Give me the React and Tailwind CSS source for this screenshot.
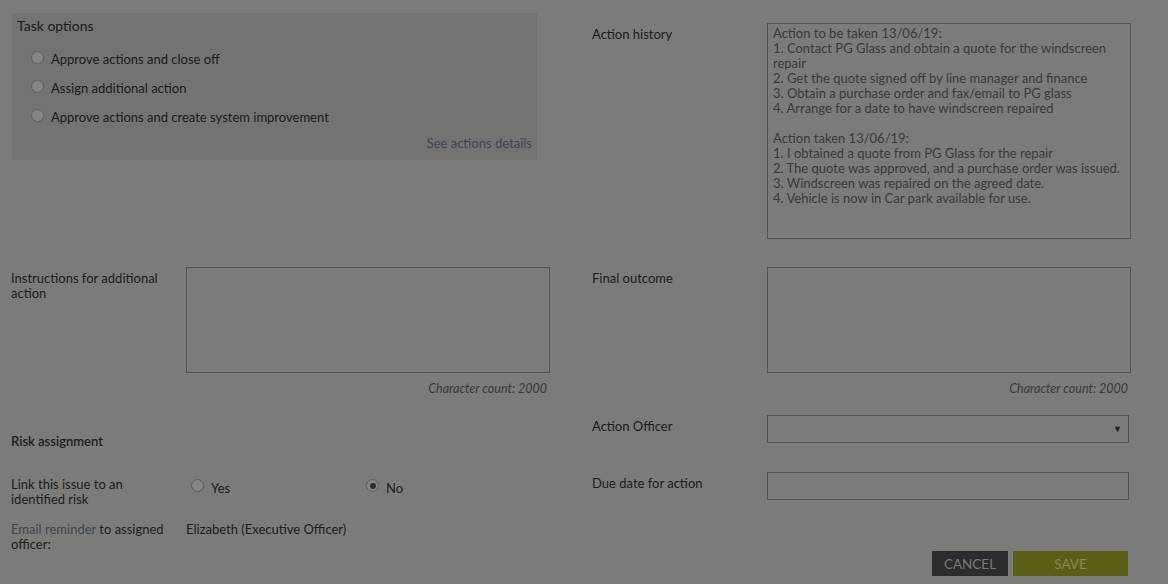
const font = { fontFamily: "Lato, 'Open Sans', sans-serif" };

function Radio({ checked }) {
  return (
    <span className="inline-flex w-[13px] h-[13px] rounded-full border border-[#5f5f5d] bg-[#858583] items-center justify-center shrink-0">
      {checked && <span className="w-[6px] h-[6px] rounded-full bg-[#2e2e2e]" />}
    </span>
  );
}

function FieldRow({ label, children, className = "" }) {
  return (
    <div className={"flex " + className}>
      <div className="w-[175px] shrink-0 pt-[4px]">
        <div className="w-[160px] leading-[15px]">{label}</div>
      </div>
      {children}
    </div>
  );
}

const history = [
  "Action to be taken 13/06/19:",
  "1. Contact PG Glass and obtain a quote for the windscreen",
  "repair",
  "2. Get the quote signed off by line manager and finance",
  "3. Obtain a purchase order and fax/email to PG glass",
  "4. Arrange for a date to have windscreen repaired",
  "",
  "Action taken 13/06/19:",
  "1. I obtained a quote from PG Glass for the repair",
  "2. The quote was approved, and a purchase order was issued.",
  "3. Windscreen was repaired on the agreed date.",
  "4. Vehicle is now in Car park available for use.",
];

export default function App() {
  return (
    <div
      className="w-[1168px] h-[584px] bg-[#7b7b79] text-[#1b1b1b] text-[13px] flex overflow-hidden"
      style={font}
    >
      {/* left column */}
      <div className="w-[580px] shrink-0 pl-[11px]">
        <div className="mt-[13px] ml-[1px] w-[525px] h-[147px] bg-[#737371] pl-[5px] pr-[5px] pt-[5px]">
          <div className="text-[14px] leading-[16px]">Task options</div>
          <div className="mt-[18px] pl-[14px] flex flex-col gap-[14px]">
            {[
              "Approve actions and close off",
              "Assign additional action",
              "Approve actions and create system improvement",
            ].map(t => (
              <div key={t} className="flex items-start gap-[7px] leading-[15px]">
                <span className="-mt-[1px]"><Radio /></span>
                <span>{t}</span>
              </div>
            ))}
          </div>
          <div className="text-right mt-[11px] text-[#3e4552] leading-[15px]">See actions details</div>
        </div>

        <FieldRow label="Instructions for additional action" className="mt-[107px]">
          <div className="w-[364px] h-[106px] border border-[#545452]" />
        </FieldRow>
        <div className="w-[536px] text-right italic text-[#3a3a3a] text-[12.5px] leading-[15px] mt-[8px]">
          Character count: 2000
        </div>

        <div className="mt-[38px] font-semibold leading-[15px]">Risk assignment</div>

        <FieldRow label="Link this issue to an identified risk" className="mt-[24px]">
          <div className="flex items-start pt-[6px] w-[175px] gap-[7px] ml-[5px]">
            <Radio />
            <span className="pt-[2px] leading-[15px]">Yes</span>
          </div>
          <div className="flex items-start pt-[6px] gap-[7px]">
            <Radio checked />
            <span className="pt-[2px] leading-[15px]">No</span>
          </div>
        </FieldRow>

        <FieldRow
          label={<><span className="text-[#3e4552]">Email reminder</span> to assigned officer:</>}
          className="mt-[11px]"
        >
          <div className="leading-[15px] pt-[4px]">Elizabeth (Executive Officer)</div>
        </FieldRow>
      </div>

      {/* right column */}
      <div className="flex-1 pl-[12px]">
        <FieldRow label="Action history" className="mt-[23px]">
          <div className="w-[364px] h-[216px] border border-[#545452] pl-[5px] pr-[3px] pt-[2px] text-[#3a3a3a] leading-[15px]">
            {history.map((l, i) => (
              <div key={i} className="min-h-[15px] whitespace-nowrap">{l}</div>
            ))}
          </div>
        </FieldRow>

        <FieldRow label="Final outcome" className="mt-[28px]">
          <div className="w-[364px] h-[106px] border border-[#545452]" />
        </FieldRow>
        <div className="w-[536px] text-right italic text-[#3a3a3a] text-[12.5px] leading-[15px] mt-[8px]">
          Character count: 2000
        </div>

        <FieldRow label="Action Officer" className="mt-[19px]">
          <div className="w-[362px] h-[28px] border border-[#545452] flex items-center justify-end pr-[6px]">
            <span className="text-[9px] text-[#1e1e1e]">▼</span>
          </div>
        </FieldRow>

        <FieldRow label="Due date for action" className="mt-[29px]">
          <div className="w-[362px] h-[28px] border border-[#545452]" />
        </FieldRow>

        <div className="w-[536px] flex justify-end gap-[5px] mt-[51px]">
          <div className="w-[76px] h-[25px] pt-[1px] bg-[#2b2c2e] text-[#7a7a7a] text-[13.5px] flex items-center justify-center">CANCEL</div>
          <div className="w-[115px] h-[25px] pt-[1px] bg-[#5b5e17] text-[#858659] text-[13.5px] flex items-center justify-center">SAVE</div>
        </div>
      </div>
    </div>
  );
}
